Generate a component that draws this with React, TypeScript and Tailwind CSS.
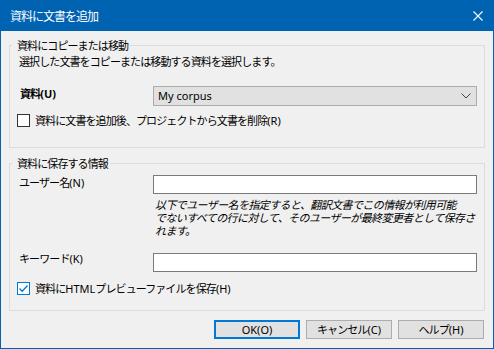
import React from "react";

const JP = "font-['Noto_Sans_CJK_JP',sans-serif] text-[11px] tracking-[-0.9px] leading-[14px] text-black";
const LAT = "font-['Noto_Sans',sans-serif] tracking-normal";

function L({ children }: { children: React.ReactNode }) {
  return <span className={LAT}>{children}</span>;
}

function Checkbox({ checked }: { checked?: boolean }) {
  return (
    <div
      className={
        "w-[13px] h-[13px] bg-white border flex items-center justify-center shrink-0 " +
        (checked ? "border-[#0078D7]" : "border-[#333333]")
      }
    >
      {checked && (
        <svg width="11" height="11" viewBox="0 0 11 11">
          <path d="M1.5 5.5 L4.2 8.2 L9.5 2.5" fill="none" stroke="#0078D7" strokeWidth="1.3" />
        </svg>
      )}
    </div>
  );
}

function Button({ children, primary }: { children: React.ReactNode; primary?: boolean }) {
  return (
    <div
      className={
        "w-[86px] h-[19px] bg-[#E1E1E1] flex items-center justify-center " +
        (primary ? "border-2 border-[#0078D7]" : "border border-[#ADADAD]") +
        " " +
        JP
      }
    >
      <span>{children}</span>
    </div>
  );
}

export default function App() {
  return (
    <div className="w-[494px] h-[349px] bg-[#0063B1] flex flex-col px-[1px] pb-[1px]">
      <div className="h-[31px] shrink-0 flex items-center justify-between pl-[9px] pr-[10px]">
        <span className="font-['Noto_Sans_CJK_JP',sans-serif] text-[12px] tracking-[-1px] text-white">
          資料に文書を追加
        </span>
        <svg width="10" height="10" viewBox="0 0 10 10">
          <path d="M0.5 0.5 L9.5 9.5 M9.5 0.5 L0.5 9.5" stroke="white" strokeWidth="1.1" />
        </svg>
      </div>
      <div className="flex-1 bg-[#F0F0F0] px-[8px] flex flex-col">
        {/* Group 1 */}
        <div className="relative mt-[14px] h-[103px] border border-[#DCDCDC] pt-[8px] pl-[9px] pr-[7px]">
          <span className={"absolute left-[2px] top-[-8px] pl-[5px] pr-[2px] bg-[#F0F0F0] " + JP}>
            資料にコピーまたは移動
          </span>
          <div className={JP}>選択した文書をコピーまたは移動する資料を選択します。</div>
          <div className="flex items-start mt-[18px]">
            <div className={"w-[134px] pl-[1px] font-bold " + JP}>
              資料<L>(U)</L>
            </div>
            <div className="w-[324px] h-[20px] bg-[#E1E1E1] border border-[#ADADAD] flex items-center justify-between pl-[4px] pr-[5px]">
              <span className="font-['Noto_Sans',sans-serif] text-[11px] leading-[14px] text-black">My corpus</span>
              <svg width="10" height="6" viewBox="0 0 10 6">
                <path d="M0.5 0.5 L5 5 L9.5 0.5" fill="none" stroke="#444" strokeWidth="1" />
              </svg>
            </div>
          </div>
          <div className="flex items-center mt-[7px] ml-[-2px] gap-[5px]">
            <Checkbox />
            <span className={JP}>
              資料に文書を追加後、プロジェクトから文書を削除<L>(R)</L>
            </span>
          </div>
        </div>

        {/* Group 2 */}
        <div className="relative mt-[15px] h-[148px] border border-[#DCDCDC] pt-[11px] pl-[9px] pr-[7px]">
          <span className={"absolute left-[2px] top-[-8px] pl-[5px] pr-[2px] bg-[#F0F0F0] " + JP}>
            資料に保存する情報
          </span>
          <div className="flex items-start">
            <div className={"w-[134px] " + JP}>
              ユーザー名<L>(N)</L>
            </div>
            <div className="w-[324px] h-[19px] bg-white border border-[#7A7A7A]" />
          </div>
          <div className="pl-[136px] mt-[4px] font-['Noto_Sans_CJK_JP',sans-serif] text-[11px] tracking-[-0.6px] leading-[13px] italic whitespace-nowrap text-black">
            以下でユーザー名を指定すると、翻訳文書でこの情報が利用可能
            <br />
            でないすべての行に対して、そのユーザーが最終変更者として保存さ
            <br />
            れます。
          </div>
          <div className="flex items-start mt-[16px]">
            <div className={"w-[134px] mt-[-2px] " + JP}>
              キーワード<L>(K)</L>
            </div>
            <div className="w-[324px] h-[19px] bg-white border border-[#7A7A7A]" />
          </div>
          <div className="flex items-center mt-[9px] ml-[-2px] gap-[5px]">
            <Checkbox checked />
            <span className={JP}>
              資料に<L>HTML</L>プレビューファイルを保存<L>(H)</L>
            </span>
          </div>
        </div>

        {/* Buttons */}
        <div className="flex justify-end gap-[6px] mt-[9px] pr-[1px]">
          <Button primary>
            <L>OK(O)</L>
          </Button>
          <Button>
            キャンセル<L>(C)</L>
          </Button>
          <Button>
            ヘルプ<L>(H)</L>
          </Button>
        </div>
      </div>
    </div>
  );
}
